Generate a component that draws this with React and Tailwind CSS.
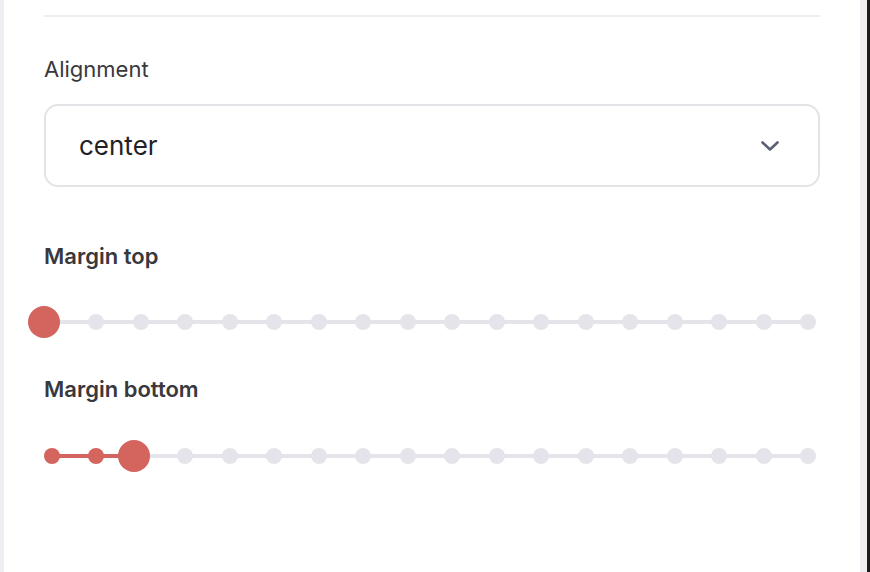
import { useState } from "react";

const STEPS = 18;

const StepSlider = ({ value }) => {
  const frac = value / (STEPS - 1);
  return (
    <div className="relative h-[32px] w-full">
      {/* Track */}
      <div className="absolute left-0 right-[12px] top-[14px] h-[4px] bg-[#e4e4ea]" />
      {value > 0 && (
        <div
          className="absolute left-[8px] top-[14px] h-[4px] bg-[#d3645e]"
          style={{ width: `calc((100% - 11px) * ${frac} - 8px)` }}
        />
      )}
      {/* Dots */}
      <div className="absolute inset-x-0 top-0 flex h-[32px] items-center justify-between pr-[4px]">
        {Array.from({ length: STEPS }).map((_, i) => (
          <span
            key={i}
            className={`block h-[16px] w-[16px] rounded-full ${
              i < value ? "bg-[#d3645e]" : "bg-[#e4e4ea]"
            }`}
          />
        ))}
      </div>
      {/* Thumb */}
      <span
        className="absolute top-0 h-[32px] w-[32px] -translate-x-1/2 rounded-full bg-[#d3645e]"
        style={{ left: `calc((100% - 11px) * ${frac})` }}
      />
    </div>
  );
};

const App = () => {
  const [alignment] = useState("center");

  return (
    <div
      className="flex h-screen w-full overflow-hidden"
      style={{ fontFamily: "Inter, 'Noto Sans', sans-serif" }}
    >
      <div className="w-[4px] bg-[#efeff3]" />
      <div className="flex-1 bg-white px-[40px]">
        <div className="mt-[15px] h-[2px] bg-[#efeff1]" />

        <div className="mt-[38px] text-[22px] leading-[28px] text-[#38383d]">
          Alignment
        </div>
        <div className="mt-[21px] flex h-[83px] items-center justify-between rounded-[14px] border-2 border-[#e4e4e8] pl-[33px] pr-[38px]">
          <span className="text-[26px] text-[#222226]">{alignment}</span>
          <svg width="20" height="12" viewBox="0 0 20 12" fill="none">
            <path
              d="M2.5 2.5 L10 9.5 L17.5 2.5"
              stroke="#5a6174"
              strokeWidth="2.6"
              strokeLinecap="round"
              strokeLinejoin="round"
            />
          </svg>
        </div>

        <div className="mt-[55px] text-[22px] font-semibold leading-[28px] text-[#38383d]">
          Margin top
        </div>
        <div className="mt-[36px]">
          <StepSlider value={0} />
        </div>

        <div className="mt-[37px] text-[22px] font-semibold leading-[28px] text-[#38383d]">
          Margin bottom
        </div>
        <div className="mt-[37px]">
          <StepSlider value={2} />
        </div>
      </div>
      <div className="w-[7px] bg-[#eeeef3]" />
      <div className="w-[3px] bg-[#1c1c1e]" />
    </div>
  );
};

export default App;
